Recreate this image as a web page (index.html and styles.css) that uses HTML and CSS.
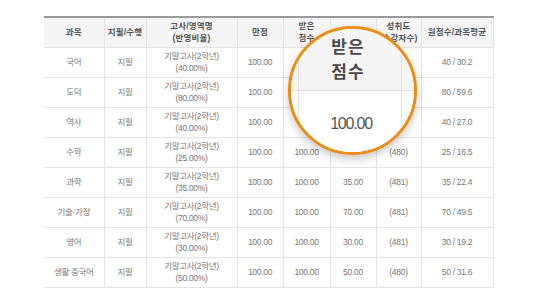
FILE: index.html
```html
<!DOCTYPE html>
<html lang="ko">
<head>
<meta charset="utf-8">
<title>성적표</title>
<link rel="stylesheet" href="styles.css">
</head>
<body>
<div class="page">
  <table class="grades">
    <colgroup>
      <col class="c-subj"><col class="c-type"><col class="c-exam"><col class="c-full">
      <col class="c-got"><col class="c-sum"><col class="c-ach"><col class="c-avg">
    </colgroup>
    <thead>
      <tr>
        <th>과목</th><th>지필/수행</th><th>고사/영역명<br>(반영비율)</th><th>만점</th>
        <th>받은<br>점수</th><th></th><th>성취도<br>(수강자수)</th><th>원점수/과목평균</th>
      </tr>
    </thead>
    <tbody>
      <tr><td>국어</td><td>지필</td><td>기말고사(2학년)<br>(40.00%)</td><td>100.00</td><td></td><td></td><td></td><td>40 / 30.2</td></tr>
      <tr><td>도덕</td><td>지필</td><td>기말고사(2학년)<br>(80.00%)</td><td>100.00</td><td></td><td></td><td></td><td>80 / 59.6</td></tr>
      <tr><td>역사</td><td>지필</td><td>기말고사(2학년)<br>(40.00%)</td><td>100.00</td><td></td><td></td><td></td><td>40 / 27.0</td></tr>
      <tr><td>수학</td><td>지필</td><td>기말고사(2학년)<br>(25.00%)</td><td>100.00</td><td>100.00</td><td></td><td>(480)</td><td>25 / 16.5</td></tr>
      <tr><td>과학</td><td>지필</td><td>기말고사(2학년)<br>(35.00%)</td><td>100.00</td><td>100.00</td><td>35.00</td><td>(481)</td><td>35 / 22.4</td></tr>
      <tr><td>기술·가정</td><td>지필</td><td>기말고사(2학년)<br>(70.00%)</td><td>100.00</td><td>100.00</td><td>70.00</td><td>(481)</td><td>70 / 49.5</td></tr>
      <tr><td>영어</td><td>지필</td><td>기말고사(2학년)<br>(30.00%)</td><td>100.00</td><td>100.00</td><td>30.00</td><td>(481)</td><td>30 / 19.2</td></tr>
      <tr><td>생활 중국어</td><td>지필</td><td>기말고사(2학년)<br>(50.00%)</td><td>100.00</td><td>100.00</td><td>50.00</td><td>(480)</td><td>50 / 31.6</td></tr>
    </tbody>
  </table>

  <div class="lens">
    <div class="lens-grid">
      <div class="lg-head"></div>
      <div class="lg-head lg-mid lg-title">받은<br>점수</div>
      <div class="lg-head"></div>
      <div class="lg-body"></div>
      <div class="lg-body lg-mid lg-value">100.00</div>
      <div class="lg-body"></div>
    </div>
  </div>
</div>
</body>
</html>
```

FILE: styles.css
```css
html, body {
  margin: 0;
  padding: 0;
  background: #ffffff;
}

.page {
  position: relative;
  width: 536px;
  height: 305px;
  padding: 16px 0 0 44px;
  box-sizing: border-box;
  font-family: "Liberation Sans", "Noto Sans CJK KR", sans-serif;
}

.grades {
  width: 449px;
  border-collapse: collapse;
  table-layout: fixed;
  border-top: 2px solid #9a9a9a;
}

.c-subj { width: 60px; }
.c-type { width: 42px; }
.c-exam { width: 91px; }
.c-full { width: 46px; }
.c-got  { width: 47px; }
.c-sum  { width: 46px; }
.c-ach  { width: 45px; }
.c-avg  { width: 72px; }

.grades th,
.grades td {
  height: 29px;
  padding: 0;
  border: 1px solid #e4e4e4;
  text-align: center;
  vertical-align: middle;
  font-size: 8.5px;
  line-height: 11.5px;
  white-space: nowrap;
}

.grades th {
  background: #f5f5f5;
  color: #555555;
  font-weight: 700;
  letter-spacing: 0.2px;
}

.grades td {
  color: #777777;
  font-weight: 400;
  letter-spacing: -0.3px;
}

.grades tr > :first-child { border-left: none; }

.lens {
  position: absolute;
  left: 288px;
  top: 26px;
  width: 129px;
  height: 129px;
  box-sizing: border-box;
  border: 3px solid #ee8c12;
  border-radius: 50%;
  overflow: hidden;
  background: #ffffff;
  box-shadow: 0 4px 8px rgba(0, 0, 0, 0.22);
}

.lens-grid {
  display: grid;
  grid-template-columns: 7px 104px 1fr;
  grid-template-rows: 62px 1fr;
  height: 100%;
}

.lg-head {
  background: #f5f5f5;
  border-bottom: 1px solid #e0e0e0;
}

.lg-body {
  background: #ffffff;
}

.lg-mid {
  border-left: 1px solid #e0e0e0;
  border-right: 1px solid #e0e0e0;
}

.lg-title {
  display: flex;
  align-items: center;
  justify-content: center;
  text-align: center;
  padding: 0 4px 2px 0;
  font-family: "Noto Sans CJK KR", sans-serif;
  font-size: 17px;
  line-height: 24.5px;
  font-weight: 700;
  color: #4a4a4a;
  letter-spacing: 1px;
}

.lg-value {
  display: flex;
  align-items: center;
  justify-content: center;
  padding: 4px 0 0 2px;
  font-family: "Liberation Sans", sans-serif;
  font-size: 16px;
  color: #555555;
  letter-spacing: -1.2px;
}
```
